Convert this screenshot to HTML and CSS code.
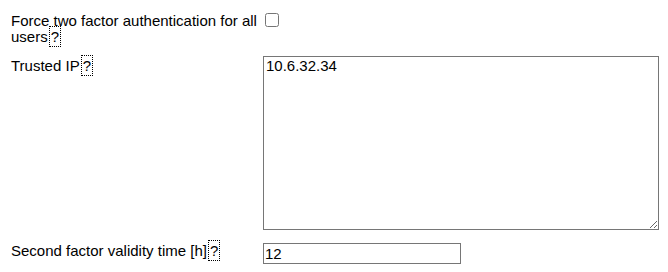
FILE: index.html
```html
<!DOCTYPE html>
<html>
<head>
<meta charset="utf-8">
<link rel="stylesheet" href="styles.css">
</head>
<body>
<div class="form">
  <div class="label row-check">Force two factor authentication for all users<span class="help">?</span></div>
  <div class="field row-check"><input type="checkbox" class="check"></div>

  <div class="label row-area">Trusted IP<span class="help">?</span></div>
  <div class="field row-area"><textarea class="area">10.6.32.34</textarea></div>

  <div class="label row-text">Second factor validity time [h]<span class="help">?</span></div>
  <div class="field row-text"><input type="text" class="text" value="12"></div>
</div>
</body>
</html>
```

FILE: styles.css
```css
body {
  margin: 8px;
  background: #fff;
  color: #000;
  font-family: "Liberation Sans", Arial, sans-serif;
  font-size: 15px;
}
.form {
  display: grid;
  grid-template-columns: 250px max-content;
  gap: 2px;
  padding: 2px;
}
.label,
.field {
  padding: 3px 1px;
}
.label {
  line-height: 16px;
}
.field {
  line-height: 0;
}
.row-check {
  padding-bottom: 6px;
}
.label.row-area {
  padding-top: 5px;
}
.help {
  border: 1px dotted #000;
  padding: 1px 1px;
  margin-left: 1px;
}
.check {
  margin: 0 0 0 2px;
  width: 14px;
  height: 14px;
}
.area {
  display: block;
  margin: 0 0 5px 0;
  width: 390px;
  height: 172px;
  padding: 0 2px;
  border: 1px solid #767676;
  font-family: "Liberation Sans", Arial, sans-serif;
  font-size: 15px;
  line-height: 17px;
  resize: both;
}
.text {
  display: block;
  margin: 0;
  width: 194px;
  height: 19px;
  padding: 0 1px;
  border: 1px solid #767676;
  font-family: "Liberation Sans", Arial, sans-serif;
  font-size: 15px;
  box-sizing: content-box;
}
```
